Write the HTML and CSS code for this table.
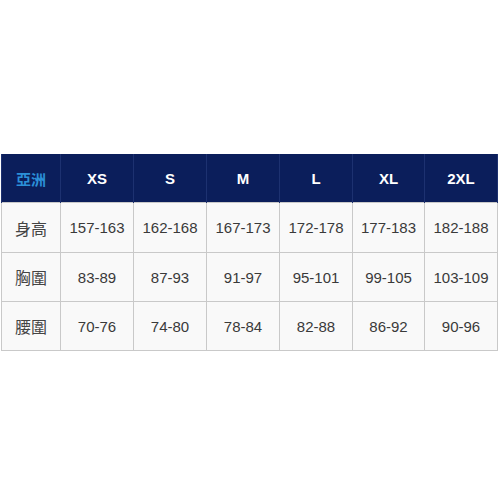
FILE: index.html
```html
<!DOCTYPE html>
<html>
<head>
<meta charset="utf-8">
<link rel="stylesheet" href="styles.css">
</head>
<body>
<div class="page">
<table class="size-table">
<colgroup>
<col class="c-label"><col class="c-size"><col class="c-size"><col class="c-size"><col class="c-size"><col class="c-size-narrow"><col class="c-size">
</colgroup>
<thead>
<tr class="head-row">
<th class="region">亞洲</th><th>XS</th><th>S</th><th>M</th><th>L</th><th>XL</th><th>2XL</th>
</tr>
</thead>
<tbody>
<tr class="row row-1">
<td class="label">身高</td><td>157-163</td><td>162-168</td><td>167-173</td><td>172-178</td><td>177-183</td><td>182-188</td>
</tr>
<tr class="row row-2">
<td class="label">胸圍</td><td>83-89</td><td>87-93</td><td>91-97</td><td>95-101</td><td>99-105</td><td>103-109</td>
</tr>
<tr class="row row-3">
<td class="label">腰圍</td><td>70-76</td><td>74-80</td><td>78-84</td><td>82-88</td><td>86-92</td><td>90-96</td>
</tr>
</tbody>
</table>
</div>
</body>
</html>
```
FILE: styles.css
```css
html, body {
  margin: 0;
  padding: 0;
  background: #ffffff;
}
.page {
  padding: 154px 0 0 1px;
}
.size-table {
  border-collapse: collapse;
  table-layout: fixed;
  width: 496px;
  font-family: "Liberation Sans", Arial, "Noto Sans CJK TC", sans-serif;
}
.c-label { width: 59px; }
.c-size { width: 73px; }
.c-size-narrow { width: 72px; }
.head-row th {
  background: #0b1e5b;
  color: #ffffff;
  font-weight: bold;
  font-size: 15px;
  height: 48px;
  padding: 0;
  text-align: center;
  border-left: 1px solid #1d3170;
  border-right: 1px solid #1d3170;
}
.head-row th.region {
  color: #2b8fd8;
  font-family: "Noto Sans CJK TC", sans-serif;
  font-size: 15px;
  font-weight: bold;
}
.row td {
  border: 1px solid #c9c9c9;
  padding: 0;
  text-align: center;
  font-size: 15px;
  color: #3a3a3a;
  background: #f9f9f9;
}
.row-1 td { height: 49px; }
.row-2 td { height: 48px; }
.row-3 td { height: 48px; }
.row td.label {
  font-family: "Noto Sans CJK TC", sans-serif;
  font-size: 16px;
  color: #444444;
}
```
